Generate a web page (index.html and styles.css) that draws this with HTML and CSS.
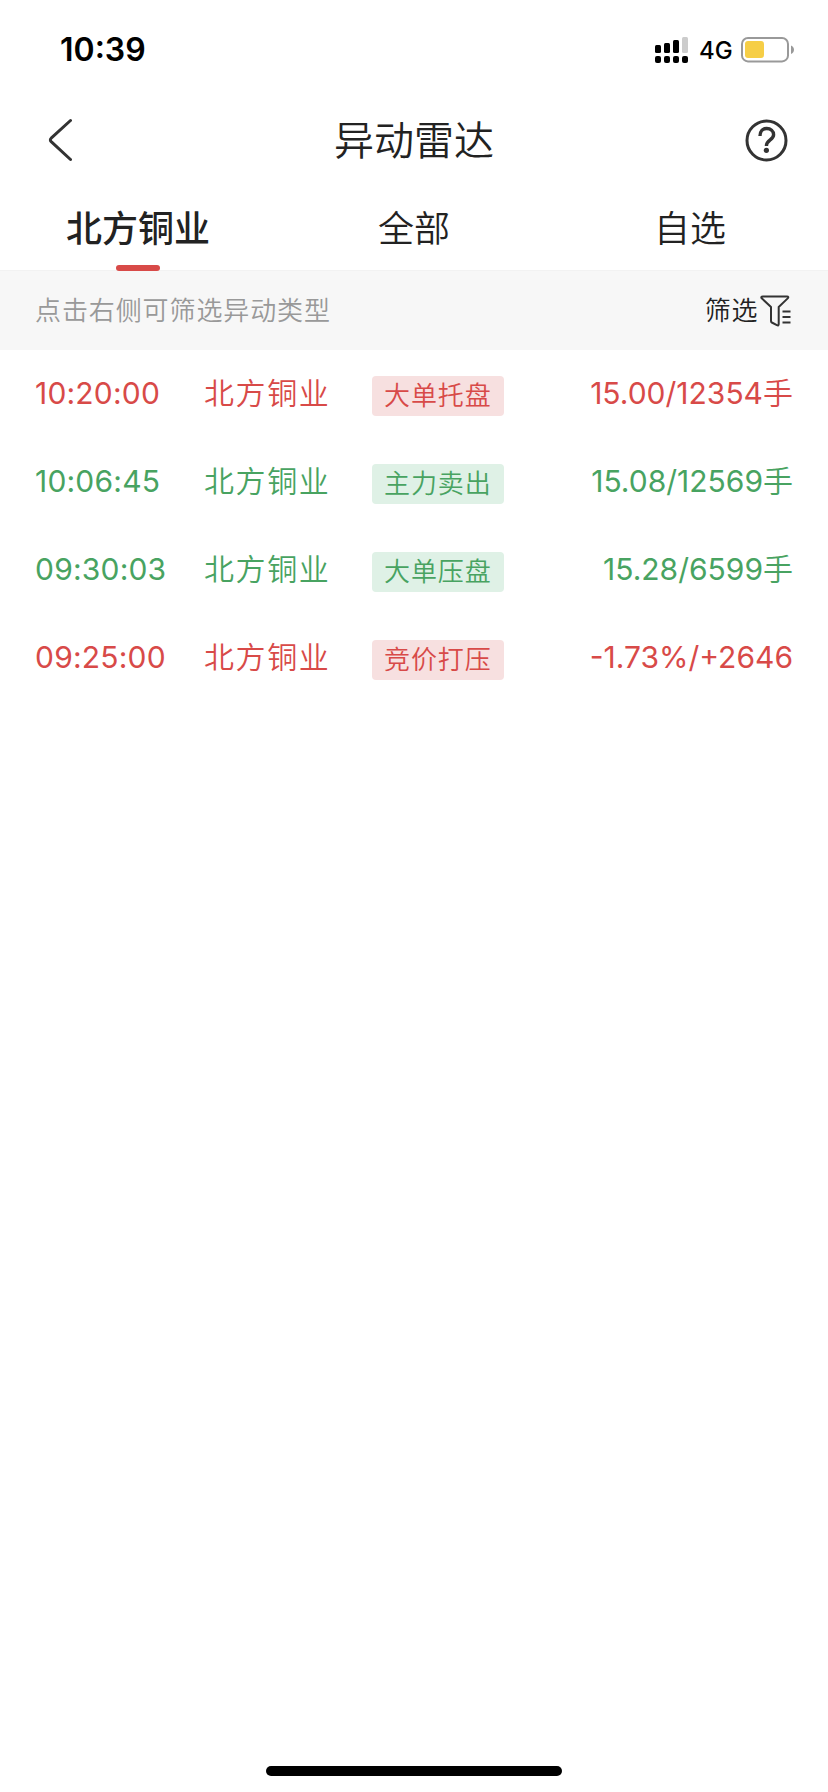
FILE: index.html
```html
<!DOCTYPE html>
<html lang="zh-CN">
<head>
<meta charset="utf-8">
<title>异动雷达</title>
<link rel="stylesheet" href="styles.css">
</head>
<body>
<div class="screen">
  <div class="status">
    <span class="clock">10:39</span>
    <div class="indicators">
      <svg class="signal" width="33" height="26" viewBox="0 0 33 26">
        <rect x="0" y="8" width="6" height="8" rx="1.5"/><rect x="9" y="6" width="6" height="10" rx="1.5"/><rect x="18" y="3" width="6" height="13" rx="1.5"/><rect x="27" y="0" width="6" height="16" rx="1.5" fill="#ccc"/>
        <rect x="0" y="19" width="6" height="7" rx="2"/><rect x="9" y="19" width="6" height="7" rx="2"/><rect x="18" y="19" width="6" height="7" rx="2"/><rect x="27" y="19" width="6" height="7" rx="2"/>
      </svg>
      <span class="network">4G</span>
      <svg class="battery" width="54" height="26" viewBox="0 0 54 26">
        <rect x="1" y="1" width="46" height="23.4" rx="6" fill="none" stroke="#999" stroke-width="2"/>
        <rect x="4" y="4" width="19" height="17" rx="3" fill="#f6ce46"/>
        <path d="M50 8.500c4 1.500 4 7 0 8.500z" fill="#999"/>
      </svg>
    </div>
  </div>
  <header class="nav">
    <svg class="back" width="24" height="44" viewBox="0 0 24 44"><path d="M22.500 2.500 3.200 20.200q-1.700 1.700 0 3.400L22.500 41.500" fill="none" stroke="#333" stroke-width="3" stroke-linecap="round"/></svg>
    <h1 class="title">异动雷达</h1>
    <svg class="help" width="43" height="43" viewBox="0 0 43 43"><circle cx="21.500" cy="21.500" r="19.500" fill="none" stroke="#333" stroke-width="3"/><path d="M15 17c0-5 2.800-7.500 6.700-7.500s6.900 2.400 6.900 6.200c0 5.300-7.200 5.300-7.200 11.300" fill="none" stroke="#333" stroke-width="3.400"/><circle cx="21.400" cy="31.300" r="2.600" fill="#333"/></svg>
  </header>
  <nav class="tabs">
    <a class="tab active">北方铜业</a>
    <a class="tab">全部</a>
    <a class="tab">自选</a>
  </nav>
  <div class="filter">
    <span class="hint">点击右侧可筛选异动类型</span>
    <div class="filter-button">
      <span>筛选</span>
      <svg class="funnel" width="32" height="32" viewBox="0 0 32 32" fill="none" stroke="#333" stroke-width="2"><path d="M2.800 1.600H27q2.200 0 .7 1.800L18.700 12V29q0 2-1.800 1.100L11.800 27.500q-.8-.4-.8-1.500V12L1.700 3.300Q.5 1.600 2.800 1.600Z" stroke-linejoin="round"/><path d="M22.500 16.500H30.500M22.500 22H30.500M22.500 27.500H30.500"/></svg>
    </div>
  </div>
  <main class="list">
    <div class="row up"><span class="time">10:20:00</span><span class="name">北方铜业</span><span class="tag">大单托盘</span><span class="value">15.00/12354<span class="unit">手</span></span></div>
    <div class="row down"><span class="time">10:06:45</span><span class="name">北方铜业</span><span class="tag">主力卖出</span><span class="value">15.08/12569<span class="unit">手</span></span></div>
    <div class="row down"><span class="time">09:30:03</span><span class="name">北方铜业</span><span class="tag">大单压盘</span><span class="value">15.28/6599<span class="unit">手</span></span></div>
    <div class="row up"><span class="time">09:25:00</span><span class="name">北方铜业</span><span class="tag">竞价打压</span><span class="value">-1.73%/+2646</span></div>
  </main>
  <div class="home"></div>
</div>
</body>
</html>
```
FILE: styles.css
```css
* { box-sizing: border-box; }
body {
  margin: 0;
  background: #fff;
  color: #222;
  font-family: Inter, "Noto Sans CJK SC", sans-serif;
  font-weight: 350;
}
.screen {
  width: 828px;
  height: 1792px;
  display: flex;
  flex-direction: column;
  overflow: hidden;
}
.status {
  height: 88px;
  padding: 12px 33px 0 60px;
  display: flex;
  align-items: center;
  justify-content: space-between;
  color: #000;
}
.clock { font-size: 32px; font-weight: 600; line-height: 40px; }
.indicators { display: flex; align-items: center; }
.network { width: 53px; padding: 2px 0 0 11px; font-size: 24px; font-weight: 500; line-height: 30px; }
.nav {
  height: 104px;
  padding: 0 40px 0 48px;
  display: grid;
  grid-template-columns: 43px 1fr 43px;
  align-items: center;
}
.title {
  margin: 0;
  padding: 2px 8px 0 0;
  font-size: 40px;
  font-weight: 350;
  line-height: 60px;
  text-align: center;
}
.tabs { height: 78px; display: grid; grid-template-columns: repeat(3, 1fr); }
.tab {
  position: relative;
  padding-top: 10px;
  font-size: 36px;
  line-height: 54px;
  text-align: center;
}
.tab.active { font-weight: 500; }
.tab.active::after {
  content: "";
  position: absolute;
  left: 116px;
  bottom: -1px;
  width: 44px;
  height: 6px;
  border-radius: 3px;
  background: #d84a48;
}
.filter {
  height: 80px;
  padding: 0 36px 0 35px;
  border-top: 1px solid #f2f2f2;
  background: #f7f7f7;
  display: flex;
  align-items: center;
  justify-content: space-between;
  font-size: 26px;
  line-height: 38px;
  letter-spacing: 0.9px;
}
.hint { color: #999; }
.filter-button { display: flex; align-items: center; gap: 1.5px; }
.list { flex: 1; }
.row {
  height: 88px;
  padding: 23px 35px 0 35px;
  display: grid;
  grid-template-columns: 169px 168px 132px 1fr;
  align-items: start;
  font-size: 30px;
  line-height: 40px;
}
.up { color: #d84a48; }
.down { color: #48a361; }
.time { font-weight: 400; letter-spacing: 0.2px; }
.name { letter-spacing: 1.6px; }
.tag {
  height: 40px;
  margin-top: 3px;
  padding-left: 12px;
  border-radius: 4px;
  font-size: 26px;
  letter-spacing: 0.9px;
}
.up .tag { background: #f7e0e0; }
.down .tag { background: #dff1e6; }
.value { font-weight: 400; text-align: right; }
.unit { font-weight: 350; }
.home {
  width: 296px;
  height: 10px;
  margin: 0 auto 16px;
  border-radius: 5px;
  background: #000;
}
```
